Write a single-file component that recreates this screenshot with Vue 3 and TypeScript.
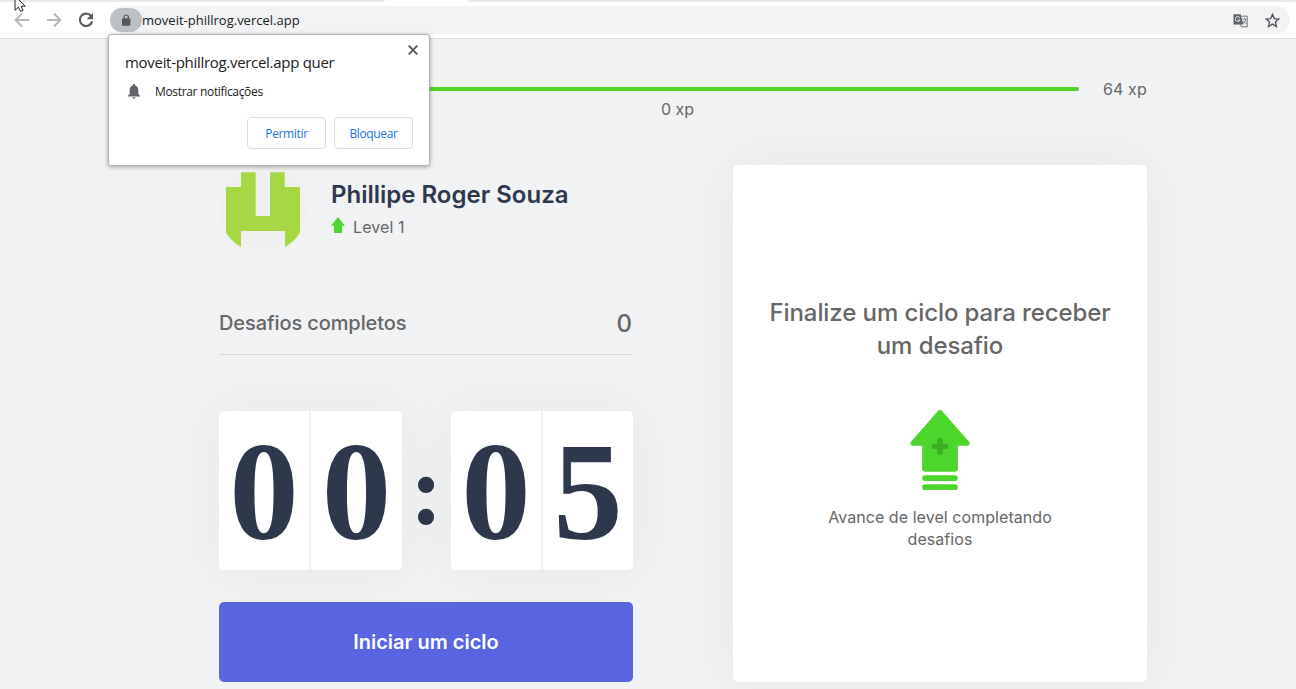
<script setup lang="ts">
const currentXp = 0
const nextLevelXp = 64
const minutes: string[] = ['0', '0']
const seconds: string[] = ['0', '5']
</script>

<template>
  <div class="window">
    <header class="chrome">
      <div class="tab-strip"><span class="tab-rest left"></span><span class="tab-rest right"></span></div>
      <div class="toolbar">
        <svg class="nav" viewBox="0 0 16 16"><path d="M15 8H2M8 1.5 1.6 8 8 14.5" fill="none" stroke="#b5b7b9" stroke-width="1.9" /></svg>
        <svg class="nav" viewBox="0 0 16 16"><path d="M1 8h13M8 1.5 14.4 8 8 14.5" fill="none" stroke="#b5b7b9" stroke-width="1.9" /></svg>
        <svg class="nav" viewBox="0 0 16 16"><path d="M13.2 4.2A6.2 6.2 0 1 0 14.1 9.4" fill="none" stroke="#5a5d61" stroke-width="2.2" /><path d="M15 1v6.3H8.7z" fill="#5a5d61" /></svg>
        <div class="address">
          <span class="lock">
            <svg viewBox="0 0 10 12"><rect x="1" y="4.3" width="8.4" height="7.4" rx="1" fill="#55585c" /><path d="M3 5V3.2a2.2 2.2 0 0 1 4.4 0V5" fill="none" stroke="#55585c" stroke-width="1.2" /></svg>
          </span>
          <span class="url">moveit-phillrog.vercel.app</span>
          <svg class="translate" viewBox="0 0 15 15">
            <path d="M.5 1.2h7.3l2.5 10.2H.5z" fill="#5f6368" />
            <path d="M6.8 4.8A2.4 2.4 0 1 0 7 7H4.8" fill="none" stroke="#f1f3f4" stroke-width="1" />
            <path d="M8.6 3.2h5.6v10.6H8.4L7.3 11.4" fill="none" stroke="#6b6e72" stroke-width="1" />
            <path d="M9.8 6.2h3.6M11.5 5.2v1M12.8 6.2c-.3 2-1.5 3.5-3 4.4M10.3 7.7c.6 1.4 1.6 2.3 2.9 3" fill="none" stroke="#6b6e72" stroke-width=".9" />
          </svg>
          <svg class="star" viewBox="0 0 14 14"><path d="m7 1.2 1.7 4 4.3.4-3.3 2.8 1 4.2L7 10.4l-3.7 2.2 1-4.2L1 5.6l4.3-.4z" fill="none" stroke="#55585c" stroke-width="1.3" /></svg>
        </div>
      </div>
    </header>

    <main class="page">
      <div class="xp-bar">
        <div class="track"><span class="current">{{ currentXp }} xp</span></div>
        <span class="xp-end">{{ nextLevelXp }} xp</span>
      </div>

      <div class="columns">
        <section class="left-col">
          <div class="profile">
            <svg class="avatar" viewBox="0 0 88 88">
              <defs><clipPath id="round"><circle cx="44" cy="44" r="44" /></clipPath></defs>
              <g clip-path="url(#round)">
                <rect width="88" height="88" fill="#f0f0f0" />
                <path d="M22 7.2h14.700v43.900H51V7.200h14.700V22h15.300v66H66V66H22v22H7V22h15z" fill="#a6d846" />
              </g>
            </svg>
            <div class="who">
              <strong>Phillipe Roger Souza</strong>
              <p>
                <svg viewBox="0 0 14 16"><path d="M7 0 14 8.8h-2.9V15.2q0 .8-.8.8H3.7q-.8 0-.8-.8V8.8H0z" fill="#4cd62b" /></svg>
                <span>Level 1</span>
              </p>
            </div>
          </div>

          <div class="completed"><span class="label">Desafios completos</span><span class="count">0</span></div>

          <div class="countdown">
            <div class="pair"><span v-for="(d, i) in minutes" :key="i">{{ d }}</span></div>
            <span class="colon">:</span>
            <div class="pair seconds"><span v-for="(d, i) in seconds" :key="i">{{ d }}</span></div>
          </div>

          <button class="start" type="button"><span>Iniciar um ciclo</span></button>
        </section>

        <section class="challenge">
          <strong>Finalize um ciclo para receber<br />um desafio</strong>
          <svg class="level-up" viewBox="0 0 60 80">
            <path d="M30 2.4 57.2 33.4H45V59H15V33.4H2.8z" fill="#4cd62b" stroke="#4cd62b" stroke-width="4.8" stroke-linejoin="round" />
            <path d="M12.2 36h35.6v23.2q0 2.200-2.200 2.200H14.400q-2.200 0-2.200-2.200z" fill="#4cd62b" />
            <rect x="12.2" y="65.2" width="35.6" height="5.7" rx="2.85" fill="#4cd62b" />
            <rect x="12.2" y="74.3" width="35.6" height="5.7" rx="2.85" fill="#4cd62b" />
            <path d="M30 30.7v11.6M24.2 36.5h11.6" stroke="#3fad22" stroke-width="5.6" stroke-linecap="round" />
          </svg>
          <p>Avance de level completando<br />desafios</p>
        </section>
      </div>
    </main>

    <aside class="permission">
      <svg class="close" viewBox="0 0 10 10"><path d="m.7.7 8.6 8.6M9.3.7.7 9.3" stroke="#55585c" stroke-width="1.9" /></svg>
      <h2>moveit-phillrog.vercel.app quer</h2>
      <div class="request">
        <svg viewBox="0 0 12 15"><path d="M6 0c.8 0 1.2.5 1.2 1.4C9.400 2 10.300 3.800 10.300 6v4L12 11.800v.8H0v-.8L1.700 10V6c0-2.200.9-4 3.100-4.600C4.800.5 5.200 0 6 0zM4.500 13.300h3a1.500 1.500 0 0 1-3 0z" fill="#5f6368" /></svg>
        <span>Mostrar notificações</span>
      </div>
      <div class="actions">
        <button type="button">Permitir</button>
        <button type="button">Bloquear</button>
      </div>
    </aside>

    <svg class="cursor" viewBox="0 0 12 19"><path d="M1-5V10.300L4.400 7.200 6.600 11.400 9 10.200 7 6.200H11.300L1-4z" fill="#fff" stroke="#222" stroke-width="1" /></svg>
  </div>
</template>

<style>
body { margin: 0; overflow: hidden; }
</style>

<style scoped>
* { box-sizing: border-box; }
svg { display: block; flex: none; }
.window { position: relative; width: 1296px; height: 689px; overflow: hidden; background: #f1f2f4; font-family: Inter, "Liberation Sans", sans-serif; color: #666; }
.chrome { height: 39px; background: #fff; border-bottom: 1px solid #d9dbdd; font-family: "Open Sans", "Noto Sans", sans-serif; }
.tab-strip { display: flex; height: 2px; }
.tab-rest { background: #e6eaee; }
.tab-rest.left { width: 385px; border-bottom-right-radius: 3px; }
.tab-rest.right { margin-left: 83px; flex: 1; border-bottom-left-radius: 3px; }
.toolbar { display: flex; align-items: center; height: 36px; padding: 0 6px 0 14px; }
.nav { width: 16px; height: 16px; margin-right: 16px; }
.address { display: flex; align-items: center; flex: 1; height: 28px; border-radius: 14px; background: #f1f3f4; }
.lock { display: flex; align-items: center; justify-content: center; width: 32px; height: 24px; border-radius: 12px; background: #bdc0c2; }
.lock svg { width: 10px; height: 12px; }
.url { flex: 1; color: #202124; font-size: 13px; white-space: nowrap; }
.translate { width: 15px; height: 15px; margin-right: 17px; }
.star { width: 15px; height: 15px; margin-right: 10px; }

.page { width: 928px; margin-left: 219px; }
.xp-bar { display: flex; align-items: center; height: 20px; margin-top: 40px; padding-left: 35px; font-size: 16px; }
.track { position: relative; flex: 1; height: 4px; margin: 0 24px; border-radius: 4px; background: #4cd62b; }
.current { position: absolute; top: 12px; left: 50%; transform: translateX(-50%); margin-left: -1px; line-height: 20px; white-space: nowrap; }
.xp-end { width: 44px; letter-spacing: .1px; white-space: nowrap; }
.columns { display: grid; grid-template-columns: 414px 414px; column-gap: 100px; margin-top: 66px; }
.profile { display: flex; align-items: center; height: 88px; }
.avatar { width: 88px; height: 88px; }
.who { margin-left: 24px; }
.who strong { display: block; color: #2e384d; font-size: 24px; line-height: 30px; font-weight: 600; white-space: nowrap; }
.who p { display: flex; align-items: center; margin: 6px 0 1px; font-size: 16px; line-height: 22px; letter-spacing: .1px; }
.who p svg { width: 14px; height: 16px; margin: -4px 8px 0 0; }
.completed { display: flex; align-items: center; justify-content: space-between; height: 63px; margin-top: 39px; border-bottom: 1px solid #d7d8da; font-weight: 500; }
.label { font-size: 20px; letter-spacing: -.1px; }
.count { font-size: 24px; margin-right: 1px; }
.countdown { display: flex; margin-top: 56px; height: 159px; color: #2e384d; font-family: "Liberation Serif", serif; font-weight: 700; }
.pair { display: grid; grid-template-columns: 90px 1fr; width: 183px; height: 159px; border-radius: 5px; background: #fff; box-shadow: 0 0 60px rgba(0, 0, 0, .05); font-size: 139px; line-height: 159px; text-align: center; }
.pair.seconds { width: 182px; }
.pair span { display: flex; justify-content: center; height: 159px; overflow: hidden; line-height: 163px; }
.pair span + span { border-left: 2px solid #f0f1f3; }
.colon { flex: 1; text-align: center; font-size: 100px; line-height: 160px; }
.start { display: block; width: 414px; height: 80px; margin-top: 32px; padding: 0; border: 0; border-radius: 5px; background: #5965e0; color: #fff; font: 600 20px Inter, sans-serif; }
.challenge { display: flex; flex-direction: column; align-items: center; height: 517px; padding-top: 131px; border-radius: 5px; background: #fff; box-shadow: 0 0 60px rgba(0, 0, 0, .05); text-align: center; }
.challenge strong { font-size: 24px; font-weight: 500; line-height: 33px; letter-spacing: -.09px; white-space: nowrap; }
.level-up { width: 60px; height: 80px; margin-top: 48px; }
.challenge p { margin: 16px 0 0; font-size: 16px; line-height: 22px; letter-spacing: .06px; white-space: nowrap; }

.permission { position: absolute; left: 108px; top: 34px; width: 322px; height: 132px; padding: 17px 17px 0; border: 1px solid #b2b3b5; border-radius: 3px; background: #fff; box-shadow: 0 1px 4px rgba(0, 0, 0, .35); font-family: "Open Sans", "Noto Sans", sans-serif; color: #202124; }
.permission .close { position: absolute; top: 10px; right: 11px; width: 10px; height: 10px; }
.permission h2 { margin: 0 0 0 -1px; font-size: 15px; line-height: 20px; font-weight: 400; letter-spacing: -.3px; white-space: nowrap; }
.request { display: flex; align-items: center; height: 20px; margin: 9px 0 0 2px; font-size: 12px; letter-spacing: -.33px; }
.request svg { width: 12px; height: 15px; margin-right: 15px; }
.actions { display: flex; justify-content: flex-end; gap: 8px; margin: 16px -1px 0 0; }
.actions button { width: 79px; height: 32px; padding: 0; border: 1px solid #dadce0; border-radius: 4px; background: #fff; color: #1a73e8; font: 400 12px "Open Sans", sans-serif; letter-spacing: -.35px; }
.cursor { position: absolute; left: 14px; top: 0; width: 12px; height: 19px; }
</style>
